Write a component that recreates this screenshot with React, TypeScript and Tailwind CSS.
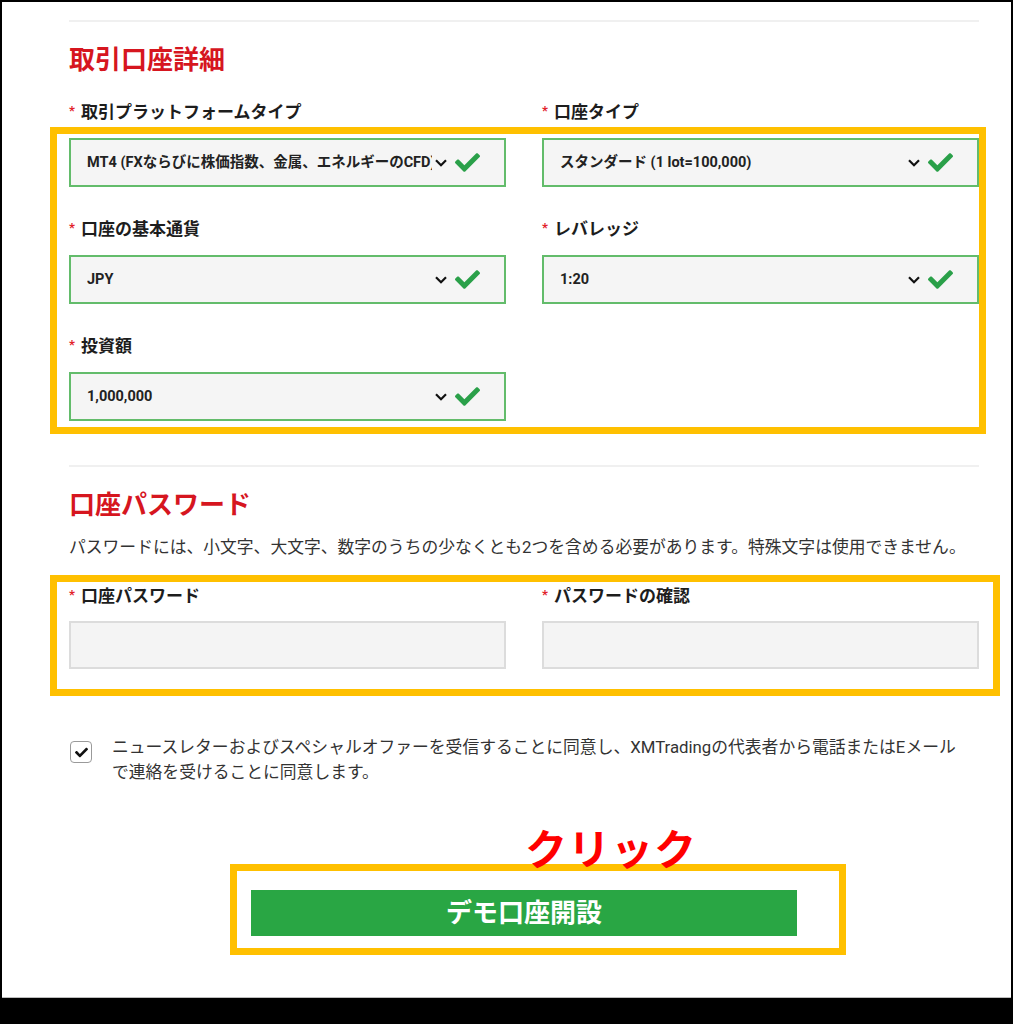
import { FaCheck } from 'react-icons/fa';

const JP = "font-['Roboto','Noto_Sans_CJK_JP',sans-serif]";

function Chevron() {
  return (
    <svg width="12" height="8" viewBox="0 0 12 8" className="flex-shrink-0">
      <path d="M1 1.2 L6 6.2 L11 1.2" fill="none" stroke="#111" strokeWidth="2.2" />
    </svg>
  );
}

function FieldLabel({ text }: { text: string }) {
  return (
    <div className="flex h-[20px] items-center">
      <span className="mr-[6px] -mt-[4px] text-[13px] font-bold leading-none text-[#e2232a]">*</span>
      <span className="text-[17px] font-bold leading-[20px] text-[#1d1d1d]">{text}</span>
    </div>
  );
}

function SelectField({ label, value }: { label: string; value: string }) {
  return (
    <div>
      <FieldLabel text={label} />
      <div className="mt-[16px] flex h-[49px] items-center border-2 border-[#63bc6b] bg-[#f5f5f5] pl-[16px] pr-[24px]">
        <span className="min-w-0 flex-1 overflow-hidden whitespace-nowrap text-[14.5px] font-bold text-[#222]">
          {value}
        </span>
        <span className="ml-[3px]">
          <Chevron />
        </span>
        <FaCheck size={25} className="ml-[8px] flex-shrink-0 text-[#2aa049]" />
      </div>
    </div>
  );
}

function PasswordField({ label }: { label: string }) {
  return (
    <div>
      <FieldLabel text={label} />
      <div className="mt-[15px] h-[48px] border-2 border-[#dcdcdc] bg-[#f4f4f4]" />
    </div>
  );
}

export default function App() {
  return (
    <div className={`relative h-[1024px] w-[1013px] bg-black px-[2px] pt-[2px] ${JP}`}>
      <div className="h-[996px] border-b border-[#bdbdbd] bg-white pl-[67px] pr-[32px] pt-[18px]">
        <div className="h-[2px] bg-[#f0f0f0]" />

        <h2 className="mt-[20px] h-[36px] text-[26px] font-bold leading-[36px] text-[#d6161f]">取引口座詳細</h2>

        <div className="mt-[24px] grid grid-cols-[437px_437px] gap-x-[36px] gap-y-[32px]">
          <SelectField label="取引プラットフォームタイプ" value="MT4 (FXならびに株価指数、金属、エネルギーのCFD)" />
          <SelectField label="口座タイプ" value="スタンダード (1 lot=100,000)" />
          <SelectField label="口座の基本通貨" value="JPY" />
          <SelectField label="レバレッジ" value="1:20" />
          <SelectField label="投資額" value="1,000,000" />
        </div>

        <div className="mt-[44px] h-[2px] bg-[#f0f0f0]" />

        <h2 className="mt-[20px] h-[36px] text-[26px] font-bold leading-[36px] text-[#d6161f]">口座パスワード</h2>
        <p className="mt-[12px] whitespace-nowrap text-[16.8px] leading-[24px] text-[#333]">
          パスワードには、小文字、大文字、数字のうちの少なくとも2つを含める必要があります。特殊文字は使用できません。
        </p>

        <div className="mt-[27px] grid grid-cols-[437px_437px] gap-x-[36px]">
          <PasswordField label="口座パスワード" />
          <PasswordField label="パスワードの確認" />
        </div>

        <div className="mt-[66px] flex gap-[20px] pl-[1px]">
          <div className="mt-[6px] flex h-[22px] w-[22px] flex-shrink-0 items-center justify-center rounded-[4px] border-[1.5px] border-[#9a9a9a] bg-white">
            <FaCheck size={13} className="text-[#111]" />
          </div>
          <p className="whitespace-nowrap text-[16.8px] leading-[25px] text-[#333]">
            ニュースレターおよびスペシャルオファーを受信することに同意し、XMTradingの代表者から電話またはEメール
            <br />
            で連絡を受けることに同意します。
          </p>
        </div>

        <div className="mt-[105px] flex justify-center">
          <button className="h-[46px] w-[546px] bg-[#29a644] text-[26px] font-bold text-white">デモ口座開設</button>
        </div>
      </div>

      {/* annotation overlays */}
      <div className="absolute left-[50px] top-[127px] h-[307px] w-[936px] border-[7px] border-[#ffc000]" />
      <div className="absolute left-[50px] top-[575px] h-[121px] w-[950px] border-[7px] border-[#ffc000]" />
      <div className="absolute left-[230px] top-[864px] h-[91px] w-[616px] border-[7px] border-[#ffc000]" />
      <div className="absolute left-[525px] top-[830px] text-[42px] font-bold leading-none tracking-[1px] text-[#ff0000]">
        クリック
      </div>
    </div>
  );
}
